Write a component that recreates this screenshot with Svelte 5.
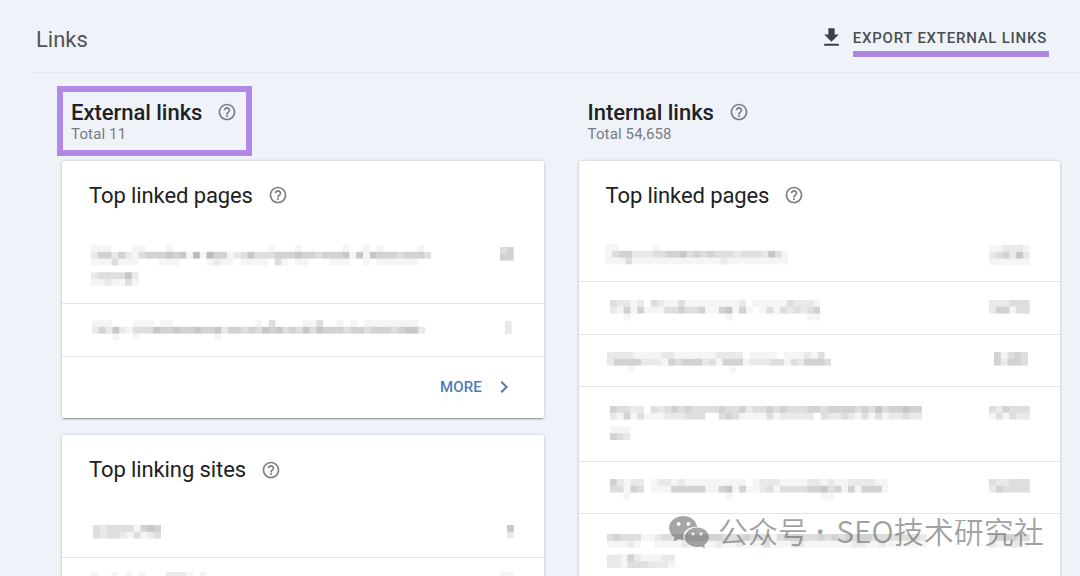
<script lang="ts">
	type Row = {
		height: number;
		x: number;
		top: number;
		cells: string[];
		countTop: number;
		countRight: number;
		count: string[];
	};

	// side of one mosaic tile
	const TILE = 6.8;

	// each digit is the darkness of one tile
	const linkedExternal: Row[] = [
		{
			height: 75, x: 28.7, top: 16,
			cells: [
				'11100011000100000000000000100010000001001010000010',
				'24424213444545161644123533344454434445151544434443',
				'11131110001110000121101111031011000111001011111100',
				'00000000000000000000000000000000000000000000000000',
				'2333352',
				'1121131'
			],
			countTop: 18.3, countRight: 30.5, count: ['34', '44']
		},
		{
			height: 53, x: 30, top: 16,
			cells: [
				'1110001110110000000000001030000113001010111111110',
				'2425213335445445445244343545343535444344344434552',
				'0001001000000000001000000000000000000000000000000'
			],
			countTop: 16.7, countRight: 32, count: ['2', '2']
		}
	];

	const linkingSites: Row[] = [
		{
			height: 54.5, x: 31.3, top: 22,
			cells: ['3233331454', '3233213123'],
			countTop: 21.5, countRight: 30, count: ['5', '2']
		},
		{
			height: 54, x: 29, top: 14.5,
			cells: ['10010101000222101', '11000000000000000'],
			countTop: 14.5, countRight: 30, count: ['11', '33']
		}
	];

	const linkedInternal: Row[] = [
		{
			height: 53.4, x: 26, top: 15.3,
			cells: ['110000010000000000000000000', '134422233445343433323332531', '111311111111111112111111111'],
			countTop: 15.7, countRight: 30, count: ['112221', '234252', '111111']
		},
		{
			height: 52.3, x: 31, top: 17.8,
			cells: ['3221203211311111111201111132221', '2141411133433411451410131323234', '0010000000000000010000000000011'],
			countTop: 17.8, countRight: 30, count: ['222333', '244133']
		},
		{
			height: 52.3, x: 28.6, top: 17.5,
			cells: ['222211112211111122220111101112130', '244442221434442314441222331324443', '000100000000000000100000000000000'],
			countTop: 17.5, countRight: 32.5, count: ['41343', '42443']
		},
		{
			height: 75, x: 31, top: 19.5,
			cells: [
				'4332203234343333433423343433344344443435344544',
				'2141311122233300343111131222220322321313122322',
				'0000000000000000000000000000000000000000000000',
				'111',
				'432'
			],
			countTop: 19.5, countRight: 30, count: ['324333', '131322']
		},
		{
			height: 52, x: 31, top: 17.5,
			cells: ['42122012212111111111012221111221211222211', '33143011144444114514112313333445341414441', '00100000000000000100000000000001100000000'],
			countTop: 17.5, countRight: 30, count: ['322333', '243333']
		},
		{
			height: 80, x: 28.6, top: 20,
			cells: [
				'34333112333433344333433313444334343434433333332',
				'11121001111211112112111311122111111122112111111',
				'00000000000000000000000000000000000000000000000',
				'2214211122',
				'2213332221'
			],
			countTop: 20, countRight: 30, count: ['344433', '211221']
		}
	];

	const shade = (level: string) => Number(level) * 0.045 - 0.004;
</script>

{#snippet help()}
	<svg class="help" viewBox="0 0 24 24">
		<path d="M11 18h2v-2h-2v2zm1-16C6.48 2 2 6.48 2 12s4.48 10 10 10 10-4.48 10-10S17.52 2 12 2zm0 18c-4.41 0-8-3.59-8-8s3.59-8 8-8 8 3.59 8 8-3.59 8-8 8zm0-14c-2.21 0-4 1.79-4 4h2c0-1.1.9-2 2-2s2 .9 2 2c0 2-3 1.75-3 5h2c0-2.25 3-2.5 3-5 0-2.21-1.79-4-4-4z" />
	</svg>
{/snippet}

{#snippet mosaic(lines: string[])}
	<svg class="mosaic" width={lines[0].length * TILE} height={lines.length * TILE}>
		{#each lines as line, y}
			{#each line.split('') as level, x}
				{#if level !== '0'}
					<rect x={x * TILE} y={y * TILE} width={TILE} height={TILE} fill-opacity={shade(level)} />
				{/if}
			{/each}
		{/each}
	</svg>
{/snippet}

{#snippet list(rows: Row[])}
	{#each rows as row}
		<div class="row" style="height: {row.height}px; padding-left: {row.x}px; padding-right: {row.countRight}px">
			<div style="padding-top: {row.top}px">{@render mosaic(row.cells)}</div>
			<div style="padding-top: {row.countTop}px">{@render mosaic(row.count)}</div>
		</div>
	{/each}
{/snippet}

<div class="page">
	<header>
		<h1>Links</h1>
		<button class="export">
			<svg viewBox="0 0 24 24"><path d="M19 9h-4V3H9v6H5l7 7 7-7zM5 18v2h14v-2H5z" /></svg>
			<span>EXPORT EXTERNAL LINKS</span>
		</button>
	</header>

	<main>
		<section>
			<div class="summary marked">
				<h2>External links {@render help()}</h2>
				<p>Total 11</p>
			</div>
			<div class="card">
				<h3>Top linked pages {@render help()}</h3>
				{@render list(linkedExternal)}
				<button class="more">
					MORE
					<svg viewBox="0 0 24 24"><path d="M8.6 16.6 13.2 12 8.6 7.4 10 6l6 6-6 6z" /></svg>
				</button>
			</div>
			<div class="card">
				<h3 class="sites">Top linking sites {@render help()}</h3>
				{@render list(linkingSites)}
			</div>
		</section>

		<section>
			<div class="summary">
				<h2>Internal links {@render help()}</h2>
				<p>Total 54,658</p>
			</div>
			<div class="card">
				<h3>Top linked pages {@render help()}</h3>
				{@render list(linkedInternal)}
			</div>
		</section>
	</main>

	<div class="watermark">
		<svg viewBox="0 0 40 33">
			<path
				fill-rule="evenodd"
				d="M14.5 0C6.5 0 0 5.200 0 12c0 3.900 2.200 7.200 5.600 9.400L4.700 25.500l4.800-2.400c1.700.5 3.300.8 5.300.8-2.500-7.500 4-13.700 13.400-13.200C27 4.500 21.300 0 14.500 0zM9.700 6a1.900 1.900 0 1 0 0 3.800 1.900 1.900 0 0 0 0-3.800zm9.700 0a1.900 1.900 0 1 0 0 3.800 1.900 1.900 0 0 0 0-3.800z"
			/>
			<path
				fill-rule="evenodd"
				d="M28 11.600c-6.600 0-12 4.300-12 9.700s5.400 9.700 12 9.700c1.500 0 2.900-.2 4.200-.6l3.900 2.100-1-3.500c3-1.800 4.900-4.600 4.900-7.700 0-5.400-5.400-9.700-12-9.700zm-4 4.900a1.600 1.600 0 1 0 0 3.200 1.600 1.600 0 0 0 0-3.200zm8 0a1.600 1.600 0 1 0 0 3.200 1.600 1.600 0 0 0 0-3.200z"
			/>
		</svg>
		<span class="account">公众号<span class="dot">·</span>SEO技术研究社</span>
	</div>
</div>

<style>
	:global(body) {
		margin: 0;
		overflow: hidden;
	}

	.page {
		position: relative;
		width: 1080px;
		height: 576px;
		overflow: hidden;
		background: #eff3f9;
		font-family: Roboto, sans-serif;
		color: #202124;
	}

	h1,
	h2,
	h3,
	p {
		margin: 0;
		font-weight: 400;
	}

	button {
		border: 0;
		background: none;
		font-family: inherit;
	}

	header {
		display: flex;
		justify-content: space-between;
		box-sizing: border-box;
		height: 73px;
		margin-left: 32px;
		padding: 0 31px 0 4px;
		border-bottom: 1px solid #e6eaf1;
	}

	h1 {
		padding-top: 26px;
		font-size: 22px;
		line-height: 28px;
		color: #505458;
	}

	.export {
		display: flex;
		gap: 9px;
		align-items: flex-start;
		padding: 25px 0 0;
	}

	.export svg {
		width: 25px;
		height: 25px;
		fill: #3c4043;
	}

	.export span {
		height: 26px;
		padding-right: 2px;
		border-bottom: 6px solid #ad87df;
		font-size: 15px;
		font-weight: 500;
		line-height: 26px;
		letter-spacing: 0.75px;
		color: #4a4e53;
	}

	main {
		display: grid;
		grid-template-columns: 482px 481.5px;
		gap: 34.5px;
		padding: 0 20px 0 62px;
	}

	.summary {
		position: relative;
		height: 88px;
		padding-left: 9px;
		box-sizing: border-box;
		padding-top: 26px;
	}

	.marked::before {
		content: '';
		position: absolute;
		left: -5px;
		top: 13px;
		width: 183px;
		height: 58px;
		border: 6px solid #b188e5;
	}

	h2,
	h3 {
		display: flex;
		align-items: center;
		gap: 15px;
	}

	h2 {
		height: 26px;
		font-size: 22px;
		font-weight: 500;
		letter-spacing: -0.03px;
	}

	.summary p {
		font-size: 15px;
		line-height: 18px;
		letter-spacing: 0.15px;
		color: #777b80;
	}

	.help {
		width: 20px;
		height: 20px;
		fill: #7b7e82;
	}

	.card {
		margin-bottom: 17px;
		border-radius: 2px;
		background: #fff;
		box-shadow: 0 2px 2px -1px rgba(60, 64, 67, 0.5), 0 0 3px rgba(60, 64, 67, 0.28);
	}

	h3 {
		height: 68px;
		padding-left: 27px;
		font-size: 22px;
		letter-spacing: -0.1px;
	}

	.sites {
		height: 69px;
		margin-bottom: -1px;
	}

	.row {
		display: flex;
		justify-content: space-between;
		box-sizing: border-box;
		border-bottom: 1px solid #e3e4e6;
	}

	.mosaic {
		display: block;
		fill: #000;
	}

	.more {
		display: flex;
		justify-content: flex-end;
		align-items: center;
		gap: 10px;
		width: 100%;
		height: 61px;
		padding: 0 28px 1px 0;
		font-size: 15px;
		font-weight: 500;
		letter-spacing: 0.15px;
		color: #4d7abb;
	}

	.more svg {
		width: 24px;
		height: 24px;
		fill: #5478ac;
	}

	.watermark {
		position: absolute;
		left: 669px;
		top: 510px;
		display: flex;
		align-items: center;
		gap: 9px;
		height: 44px;
		color: rgba(90, 90, 90, 0.58);
		white-space: nowrap;
	}

	.watermark svg {
		width: 40px;
		height: 33px;
		fill: rgba(70, 70, 70, 0.48);
	}

	.account {
		margin-top: -3px;
		font-family: 'Noto Sans CJK SC', sans-serif;
		font-size: 30px;
		font-weight: 350;
		line-height: 44px;
	}

	.dot {
		padding: 0 12px 0 8px;
		font-family: 'Noto Sans', sans-serif;
		font-weight: 600;
	}
</style>
